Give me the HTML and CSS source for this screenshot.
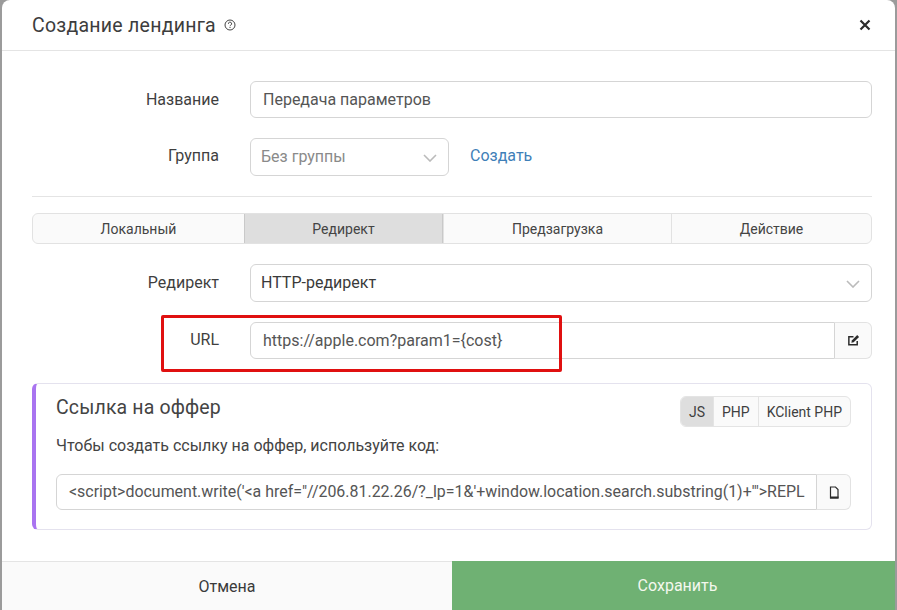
FILE: index.html
```html
<!DOCTYPE html>
<html lang="ru">
<head>
<meta charset="utf-8">
<title>Создание лендинга</title>
<link rel="stylesheet" href="styles.css">
</head>
<body>
<div class="modal">
  <header class="head">
    <h1 class="title">Создание лендинга</h1>
    <svg class="help" viewBox="0 0 12 12" width="12" height="12"><circle cx="6" cy="6" r="5" fill="none" stroke="#444" stroke-width="1"/><path d="M4.4 4.8a1.6 1.6 0 1 1 2.4 1.3c-.5.3-.8.6-.8 1.1" fill="none" stroke="#444" stroke-width="1"/><rect x="5.5" y="8" width="1" height="1" fill="#444"/></svg>
    <svg class="close" viewBox="0 0 12 12" width="12" height="12"><path d="M1.5 1.5l9 9M10.5 1.5l-9 9" stroke="#2b2b2b" stroke-width="2.2" fill="none"/></svg>
  </header>
  <main class="body">
    <div class="row row-name">
      <label class="label">Название</label>
      <div class="input grow">Передача параметров</div>
    </div>
    <div class="row row-group">
      <label class="label">Группа</label>
      <div class="input select small muted">Без группы
        <svg class="chev" viewBox="0 0 14 8" width="14" height="8"><path d="M1 1l6 6 6-6" fill="none" stroke="#bbb" stroke-width="1.6"/></svg>
      </div>
      <a class="link">Создать</a>
    </div>
    <hr class="divider">
    <div class="tabs">
      <div class="tab t1">Локальный</div>
      <div class="tab t2 active">Редирект</div>
      <div class="tab t3">Предзагрузка</div>
      <div class="tab t4">Действие</div>
    </div>
    <div class="row row-redirect">
      <label class="label">Редирект</label>
      <div class="input select grow dark">HTTP-редирект
        <svg class="chev" viewBox="0 0 14 8" width="14" height="8"><path d="M1 1l6 6 6-6" fill="none" stroke="#bbb" stroke-width="1.6"/></svg>
      </div>
    </div>
    <div class="row row-url">
      <label class="label">URL</label>
      <div class="group grow">
        <div class="input joined grow">https://apple.com?param1={cost}</div>
        <div class="addon">
          <svg viewBox="0 0 14 14" width="13" height="13"><path d="M11 7.5v4.2H2V3h5" fill="none" stroke="#2b2b2b" stroke-width="1.6"/><path d="M5.2 6.9l5.8-5.8 2 2-5.8 5.8-2.5.5z" fill="#2b2b2b"/></svg>
        </div>
      </div>
      <div class="marker"></div>
    </div>
    <section class="card">
      <div class="card-top">
        <h2 class="card-title">Ссылка на оффер</h2>
        <div class="langs">
          <div class="lang on">JS</div>
          <div class="lang">PHP</div>
          <div class="lang">KClient PHP</div>
        </div>
      </div>
      <p class="hint">Чтобы создать ссылку на оффер, используйте код:</p>
      <div class="group code">
        <div class="input joined grow">&lt;script&gt;document.write('&lt;a href="//206.81.22.26/?_lp=1&amp;'+window.location.search.substring(1)+'"&gt;REPL</div>
        <div class="addon copy">
          <svg viewBox="0 0 10 13" width="10" height="13"><path d="M1.5 1h5L9 3.5V12H1.5z" fill="none" stroke="#2b2b2b" stroke-width="1.2"/><path d="M1 10.5h8.5V12.5H1z" fill="#2b2b2b"/></svg>
        </div>
      </div>
    </section>
  </main>
  <footer class="foot">
    <div class="btn cancel">Отмена</div>
    <div class="btn save">Сохранить</div>
  </footer>
</div>
</body>
</html>
```
FILE: styles.css
```css
* { box-sizing: border-box; }
html, body { margin: 0; height: 100%; }
body {
  background: #9b9b9b;
  font-family: Roboto, "Noto Sans", sans-serif;
  color: #3a3a3a;
  overflow: hidden;
}
.modal {
  margin: 0 2px;
  height: 610px;
  background: #fff;
  border-radius: 8px 8px 0 0;
  display: flex;
  flex-direction: column;
  overflow: hidden;
}
.head {
  height: 51px;
  flex: none;
  display: flex;
  align-items: center;
  padding: 0 24px 0 30px;
  border-bottom: 1px solid #e4e4e4;
}
.title { margin: 0; font-size: 19.5px; font-weight: 400; color: #3d3d3d; letter-spacing: .25px; }
.help { margin-left: 8px; }
.close { margin-left: auto; }
.body { flex: 1; padding: 0 23px 0 30px; }
.row { display: flex; align-items: center; position: relative; }
.row-name { margin-top: 30px; height: 37px; }
.row-group { margin-top: 20px; height: 38px; }
.row-redirect { margin-top: 20px; height: 38px; }
.row-url { margin-top: 20px; height: 37px; }
.label { width: 187px; flex: none; text-align: right; font-size: 16px; color: #3f3f3f; margin-right: 31px; padding-bottom: 2px; }
.input {
  height: 100%;
  border: 1px solid #d5d5d5;
  border-radius: 6px;
  background: #fff;
  display: flex;
  align-items: center;
  padding: 0 12px 2px;
  font-size: 16px;
  color: #555;
  position: relative;
  white-space: nowrap;
  overflow: hidden;
}
.row-name .label, .row-name .input, .row-url .input { padding-bottom: 0; }
.row-group .label { padding-bottom: 4px; }
.grow { flex: 1; min-width: 0; }
.small { width: 199px; padding-left: 10px; }
.muted { color: #8a8a8a; }
.dark { color: #3a3a3a; padding-left: 10px; }
.chev { position: absolute; right: 11px; top: 50%; margin-top: -3px; }
.link { margin-left: 21px; font-size: 16px; color: #3f7fb8; padding-bottom: 4px; }
.divider { border: 0; border-top: 1px solid #e4e4e4; margin: 20px 0 16px; }
.tabs {
  display: flex;
  height: 31px;
  border: 1px solid #e2e2e2;
  border-radius: 6px;
  background: #fafafa;
  overflow: hidden;
}
.tab {
  display: flex;
  align-items: center;
  justify-content: center;
  font-size: 14px;
  color: #444;
  border-left: 1px solid #e2e2e2;
}
.t1 { width: 211px; border-left: 0; }
.t2 { width: 199px; }
.t3 { width: 228px; }
.t4 { flex: 1; }
.active { background: #dedede; border-left-color: #c9c9c9; border-right: 1px solid #c9c9c9; }
.group { display: flex; height: 100%; }
.joined { border-radius: 6px 0 0 6px; }
.addon {
  width: 37px;
  flex: none;
  border: 1px solid #e2e2e2;
  border-left: 0;
  border-radius: 0 6px 6px 0;
  background: #fafafa;
  display: flex;
  align-items: center;
  justify-content: center;
}
.marker {
  position: absolute;
  left: 129px;
  top: -7px;
  width: 401px;
  height: 57px;
  border: 3px solid #e01010;
  border-radius: 2px;
  pointer-events: none;
}
.card {
  margin-top: 24px;
  height: 147px;
  border: 1px solid #e4e2ee;
  border-left: 4px solid #a974f0;
  border-radius: 6px;
  padding: 12px 20px 0 20px;
}
.card-top { display: flex; justify-content: space-between; align-items: flex-start; height: 31px; }
.card-title { margin: 1px 0 0; font-size: 19.5px; font-weight: 400; color: #444; letter-spacing: .15px; line-height: 22px; }
.langs { display: flex; height: 31px; border: 1px solid #e4e4e4; border-radius: 6px; background: #fafafa; overflow: hidden; }
.lang { display: flex; align-items: center; padding: 0 8px; font-size: 14px; color: #3f3f3f; border-left: 1px solid #e4e4e4; }
.lang:first-child { border-left: 0; }
.on { background: #dedede; }
.hint { margin: 9px 0 0; font-size: 16px; color: #444; line-height: 20px; }
.code { height: 36px; margin-top: 18px; }
.code .input { font-size: 15.95px; }
.copy { width: 34px; }
.foot { height: 49px; flex: none; display: flex; }
.btn { display: flex; align-items: center; justify-content: center; font-size: 16px; }
.cancel { width: 450px; background: #fafafa; border-top: 1px solid #e4e4e4; color: #3a3a3a; }
.save { flex: 1; background: #6fb173; color: #f4f8ee; padding-left: 8px; }
```
